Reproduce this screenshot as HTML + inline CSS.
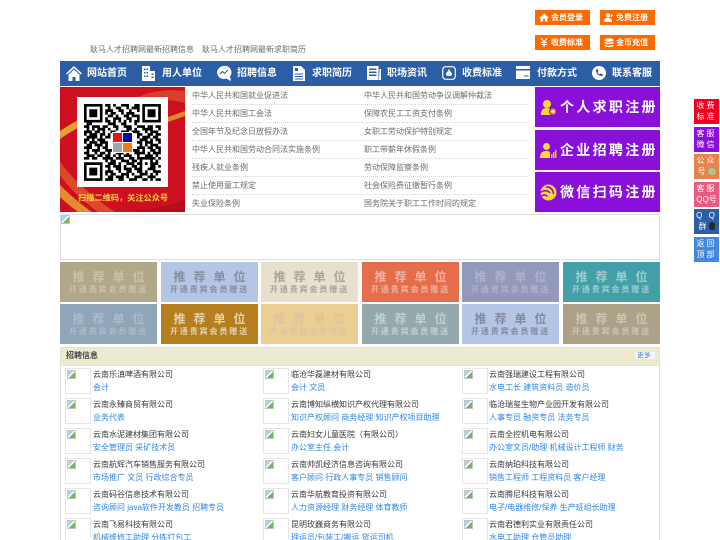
<!DOCTYPE html>
<html lang="zh-CN">
<head>
<meta charset="utf-8">
<title>耿马人才招聘网</title>
<style>
html,body{margin:0;padding:0;background:#fff;width:720px;height:540px;overflow:hidden;}
#w{position:relative;width:720px;height:540px;overflow:hidden;background:#fff;font-family:"Liberation Sans","Noto Sans CJK SC",sans-serif;filter:blur(.3px);}
.a{position:absolute;white-space:nowrap;}
a{text-decoration:none;color:inherit;}
.tb{position:absolute;width:55px;height:15px;background:#ff6a00;color:#fff;font-size:8px;line-height:15px;font-weight:bold;}
.tb svg{position:absolute;left:4px;top:3px;}
.tb span{position:absolute;left:16px;top:0;}
.nav{position:absolute;left:60px;top:61px;width:600px;height:25px;background:#2c5ea6;}
.nav span{position:absolute;top:0;line-height:25px;font-size:10px;font-weight:bold;color:#fff;white-space:nowrap;}
.nav svg{position:absolute;top:5px;}
.l{position:absolute;font-size:8px;line-height:18px;height:18px;color:#6c6c6c;white-space:nowrap;}
.dot{position:absolute;left:192px;width:336px;height:0;border-top:1px dotted #d6d6d6;}
.reg{position:absolute;left:535px;width:125px;background:#8a0fd8;color:#fff;font-size:14px;font-weight:bold;letter-spacing:2.3px;white-space:nowrap;}
.reg span{position:absolute;left:25px;top:50%;margin-top:-10px;line-height:20px;}
.reg svg{position:absolute;left:5px;top:50%;margin-top:-8px;}
.t{position:absolute;width:97px;height:40px;text-align:center;white-space:nowrap;}
.t b{position:absolute;left:0;right:0;top:8px;font-size:12px;line-height:14px;letter-spacing:8px;text-indent:8px;}
.t i{position:absolute;left:0;right:0;top:22px;font-style:normal;font-size:8px;line-height:12px;letter-spacing:1.9px;font-weight:bold;}
.s{position:absolute;left:694px;width:25px;color:#fff;font-size:8px;line-height:10.5px;text-align:center;letter-spacing:2px;}
.s div{padding-top:2px;}
.im{position:absolute;width:24px;height:24px;border:1px solid #e6e6e6;background:#fff;}
.im::before{content:"";position:absolute;left:1px;top:1px;width:7px;height:7px;border:1px solid #c4c4c4;background:linear-gradient(135deg,#b8cfee 0 42%,#fff 42% 55%,#70b864 55%);}
.n{position:absolute;font-size:8px;line-height:12px;color:#3a3a3a;white-space:nowrap;}
.j{position:absolute;font-size:8px;line-height:12px;color:#2f86e4;white-space:nowrap;}
</style>
</head>
<body>
<div id="w">

<div class="a" style="left:90px;top:44px;font-size:8px;line-height:12px;color:#6c6c6c;">耿马人才招聘网最新招聘信息</div>
<div class="a" style="left:202px;top:44px;font-size:8px;line-height:12px;color:#6c6c6c;">耿马人才招聘网最新求职简历</div>

<a class="tb" href="#" style="left:535px;top:10px;"><svg width="10" height="9" viewBox="0 0 10 9"><path d="M5 0.5 0 5h1.5v3.5h2.500V6h2v2.500h2.500V5H10z" fill="#fff"/></svg><span>会员登录</span></a>
<a class="tb" href="#" style="left:600px;top:10px;"><svg width="10" height="9" viewBox="0 0 10 9"><circle cx="4" cy="2.500" r="2.200" fill="#fff"/><path d="M0 9c0-3 1.500-4 4-4s4 1 4 4z" fill="#fff"/><path d="M7 1h1v1h1v1H8v1H7z" fill="#fff"/></svg><span>免费注册</span></a>
<a class="tb" href="#" style="left:535px;top:35px;"><svg width="10" height="9" viewBox="0 0 10 9"><path d="M2 0l3 4 3-4M2 4.500h6M2 6.500h6M5 4v5" fill="none" stroke="#fff" stroke-width="1.100"/></svg><span>收费标准</span></a>
<a class="tb" href="#" style="left:600px;top:35px;"><svg width="10" height="10" viewBox="0 0 10 10"><ellipse cx="5" cy="2" rx="4.500" ry="1.800" fill="#fff"/><path d="M0.500 3.500c1 1.500 8 1.500 9 0v1.500c-1 1.500-8 1.500-9 0zM0.500 6.500c1 1.500 8 1.500 9 0V8c-1 1.500-8 1.500-9 0z" fill="#fff"/></svg><span>金币充值</span></a>

<div class="nav">
  <svg style="left:6px" width="16" height="15" viewBox="0 0 16 15"><path d="M8 0 0 7.500l1 1L8 2.200l7 6.300 1-1zM8 3.600 2.500 8.600V15H6.500v-4h3v4h4V8.600z" fill="#fff"/></svg>
  <span style="left:27px">网站首页</span>
  <svg style="left:82px" width="13" height="15" viewBox="0 0 13 15"><path d="M0 0h8v15H0zM8 5h5v10H8z" fill="#fff"/><path d="M2 2.500h1.500V4H2zM4.500 2.500H6V4H4.500zM2 6h1.500v1.500H2zM4.500 6H6v1.500H4.500zM2 9.500h1.500V11H2zM4.500 9.500H6V11H4.500zM9.500 7.500H11.500V9H9.500zM9.500 10.500H11.500V12H9.500z" fill="#2c5ea6"/></svg>
  <span style="left:102px">用人单位</span>
  <svg style="left:157px" width="15" height="15" viewBox="0 0 15 15"><path d="M7 0a7 6.500 0 1 0 2.500 12.600L14 15l-1-4.500A6.500 6.500 0 0 0 7 0z" fill="#fff"/><path d="M3 8l2.500-2.500L7.500 7.500 11 4" fill="none" stroke="#2c5ea6" stroke-width="1.100"/></svg>
  <span style="left:177px">招聘信息</span>
  <svg style="left:233px" width="12" height="15" viewBox="0 0 12 15"><path d="M0 0h8l4 4v11H0z" fill="#fff"/><path d="M2 2h3v3H2zM2 7.500h8v1H2zM2 10h8v1H2zM2 12.500h8v1H2z" fill="#2c5ea6"/></svg>
  <span style="left:252px">求职简历</span>
  <svg style="left:307px" width="14" height="14" viewBox="0 0 14 14"><path d="M0 0h11.500v14H0z" fill="#fff"/><path d="M2 2.500h7.500v1.500H2zM2 5.500h7.500V7H2zM2 8.500h7.500V10H2z" fill="#2c5ea6"/><path d="M12.500 3H14v11h-2z" fill="#fff"/></svg>
  <span style="left:327px">职场资讯</span>
  <svg style="left:382px" width="14" height="14" viewBox="0 0 14 14"><rect x="0.700" y="0.700" width="12.600" height="12.600" rx="3" fill="none" stroke="#fff" stroke-width="1.200"/><path d="M7 3c1 1 1 1.500.500 2 1.500.500 2.500 2 2.500 3.500 0 1-1 1.500-3 1.500s-3-.5-3-1.500C4 7 5 5.500 6.500 5 6 4.500 6 4 7 3z" fill="#fff"/></svg>
  <span style="left:402px">收费标准</span>
  <svg style="left:456px" width="14" height="13" viewBox="0 0 14 13"><path d="M0 0h14v3H0zM0 4.500h14V13H0z" fill="#fff"/><path d="M8 9.500h4.500v1H8z" fill="#2c5ea6"/></svg>
  <span style="left:477px">付款方式</span>
  <svg style="left:532px" width="14" height="14" viewBox="0 0 14 14"><circle cx="7" cy="7" r="7" fill="#fff"/><path d="M4 3.500 5.500 3l1 2.300-.9.800c.4 1 1.200 1.800 2.200 2.200l.8-.9 2.300 1-.5 1.600c-3.500.6-7-3-6.400-6.500z" fill="#2c5ea6"/></svg>
  <span style="left:552px">联系客服</span>
</div>

<!-- red QR banner -->
<svg class="a" style="left:60px;top:87px;" width="125" height="125" viewBox="0 0 125 125">
  <rect width="125" height="125" fill="#cc1020"/>
  <path d="M60 20C85 3 105 2 125 4v12C100 10 85 12 60 20z" fill="#d9402a"/>
  <path d="M0 44C15 34 30 26 45 22v8C28 35 14 42 0 52z" fill="#e5a030"/>
  <path d="M108 30 125 24v5l-17 6z" fill="#e08a2c"/>
  <path d="M0 75C15 95 35 112 55 125H38C22 113 8 100 0 88z" fill="#dc4a2a"/>
  <path d="M0 98C12 110 22 118 32 125H18C10 119 4 114 0 110z" fill="#e58a30"/>
  <path d="M70 125c20-3 40-6 55-12v12z" fill="#b40d1c"/>
  <rect x="17" y="10" width="91" height="90" fill="#fff"/>
  <g transform="translate(24 17) scale(2.650)">
    <path d="M0 0h7v7H0zM1 1v5h5V1zM2 2h3v3H2zM22 0h7v7h-7zM23 1v5h5V1zM24 2h3v3h-3zM0 22h7v7H0zM1 23v5h5v-5zM2 24h3v3H2z" fill="#000" fill-rule="evenodd"/>
    <path fill="none" stroke="#000" stroke-width="1" d="
    M8 .5h2M11 .5h1M14 .5h3M19 .5h2
    M9 1.500h1M12 1.500h2M16 1.500h1M18 1.500h3
    M8 2.500h3M13 2.500h2M17 2.500h1M20 2.500h1
    M8 3.500h1M10 3.500h2M14 3.500h1M16 3.500h3
    M9 4.500h2M12 4.500h1M15 4.500h2M18 4.500h3
    M8 5.500h1M11 5.500h3M16 5.500h2M20 5.500h1
    M8 6.500h2M11 6.500h1M13 6.500h1M15 6.500h1M17 6.500h1M19 6.500h2
    M1 7.500h2M9 7.500h3M14 7.500h2M19 7.500h1
    M0 8.500h2M3 8.500h3M7 8.500h2M11 8.500h2M15 8.500h3M20 8.500h3M24 8.500h2M27 8.500h2
    M1 9.500h1M3 9.500h1M5 9.500h3M9 9.500h1M12 9.500h1M16 9.500h2M19 9.500h1M22 9.500h4M28 9.500h1
    M0 10.500h3M4 10.500h2M7 10.500h1M10 10.500h2M14 10.500h3M18 10.500h3M23 10.500h1M25 10.500h3
    M0 11.500h1M2 11.500h3M6 11.500h2M9 11.500h1M20 11.500h2M24 11.500h2M27 11.500h2
    M1 12.500h4M6 12.500h1M8 12.500h2M20 12.500h1M22 12.500h3M26 12.500h2
    M0 13.500h2M3 13.500h1M5 13.500h3M21 13.500h3M25 13.500h1M27 13.500h2
    M0 14.500h1M2 14.500h3M6 14.500h3M20 14.500h2M23 14.500h3M28 14.500h1
    M1 15.500h2M4 15.500h3M8 15.500h1M21 15.500h1M23 15.500h1M25 15.500h3
    M0 16.500h3M5 16.500h1M7 16.500h2M20 16.500h3M24 16.500h2M27 16.500h2
    M1 17.500h1M3 17.500h3M8 17.500h3M14 17.500h2M18 17.500h3M22 17.500h1M25 17.500h2M28 17.500h1
    M0 18.500h2M4 18.500h1M6 18.500h2M9 18.500h1M12 18.500h3M16 18.500h1M19 18.500h4M24 18.500h1M26 18.500h3
    M1 19.500h3M5 19.500h2M8 19.500h2M11 19.500h1M13 19.500h1M15 19.500h3M20 19.500h1M23 19.500h3M27 19.500h1
    M0 20.500h2M3 20.500h2M7 20.500h4M12 20.500h3M17 20.500h2M20 20.500h7M28 20.500h1
    M8 21.500h1M10 21.500h2M14 21.500h3M18 21.500h2M21 21.500h1M25 21.500h1M27 21.500h1
    M9 22.500h3M13 22.500h1M16 22.500h3M20 22.500h2M23 22.500h1M25 22.500h3
    M8 23.500h2M11 23.500h3M15 23.500h1M18 23.500h2M21 23.500h1M25 23.500h2M28 23.500h1
    M9 24.500h1M12 24.500h2M15 24.500h3M19 24.500h3M24 24.500h3
    M8 25.500h3M13 25.500h1M16 25.500h2M20 25.500h2M23 25.500h1M26 25.500h3
    M8 26.500h1M10 26.500h2M14 26.500h3M18 26.500h1M21 26.500h3M25 26.500h1M27 26.500h1
    M9 27.500h2M12 27.500h3M16 27.500h1M19 27.500h3M24 27.500h3
    M8 28.500h3M13 28.500h2M17 28.500h3M22 28.500h2M25 28.500h1M27 28.500h2"/>
  </g>
  <rect x="52" y="45" width="21" height="21" fill="#fff"/>
  <rect x="53" y="46" width="9" height="9" fill="#e8101a"/>
  <rect x="63" y="46" width="9" height="9" fill="#00109c"/>
  <rect x="53" y="56" width="9" height="9" fill="#a4a4a4"/>
  <rect x="63" y="56" width="9" height="9" fill="#f87818"/>
  <text x="18" y="113.500" font-size="8.200" font-weight="bold" fill="#f8d040" font-family="'Liberation Sans','Noto Sans CJK SC',sans-serif">扫描二维码，关注公众号</text>
</svg>

<!-- lists -->
<div class="dot" style="top:104px"></div><div class="dot" style="top:122px"></div><div class="dot" style="top:140px"></div><div class="dot" style="top:158px"></div><div class="dot" style="top:176px"></div><div class="dot" style="top:194px"></div>
<a class="l" href="#" style="left:192px;top:87px">中华人民共和国就业促进法</a>
<a class="l" href="#" style="left:192px;top:105px">中华人民共和国工会法</a>
<a class="l" href="#" style="left:192px;top:123px">全国年节及纪念日放假办法</a>
<a class="l" href="#" style="left:192px;top:141px">中华人民共和国劳动合同法实施条例</a>
<a class="l" href="#" style="left:192px;top:159px">残疾人就业条例</a>
<a class="l" href="#" style="left:192px;top:177px">禁止使用童工规定</a>
<a class="l" href="#" style="left:192px;top:195px">失业保险条例</a>
<a class="l" href="#" style="left:364px;top:87px">中华人民共和国劳动争议调解仲裁法</a>
<a class="l" href="#" style="left:364px;top:105px">保障农民工工资支付条例</a>
<a class="l" href="#" style="left:364px;top:123px">女职工劳动保护特别规定</a>
<a class="l" href="#" style="left:364px;top:141px">职工带薪年休假条例</a>
<a class="l" href="#" style="left:364px;top:159px">劳动保障监察条例</a>
<a class="l" href="#" style="left:364px;top:177px">社会保险费征缴暂行条例</a>
<a class="l" href="#" style="left:364px;top:195px">国务院关于职工工作时间的规定</a>

<!-- register -->
<a class="reg" href="#" style="top:87px;height:40px"><svg width="17" height="17" viewBox="0 0 17 17"><circle cx="7" cy="5" r="4" fill="#f8d838"/><path d="M1 16c0-5 2-7 6-7s5 2 5 7z" fill="#f8d838"/><circle cx="13" cy="12.500" r="3.500" fill="#f8a020" stroke="#8a0fd8"/><path d="M11.500 12.500h3M13 11v3" stroke="#fff"/></svg><span>个人求职注册</span></a>
<a class="reg" href="#" style="top:130px;height:40px"><svg width="17" height="17" viewBox="0 0 17 17"><circle cx="6.500" cy="4.500" r="3.500" fill="#f8d838"/><path d="M0 16c0-5 2-7 6.500-7 2 0 3 .5 3.500 1.500V16z" fill="#f8d838"/><path d="M11 12h1.500v4H11zM13 10h1.500v6H13zM15 8h1.500v8H15z" fill="#f8b030"/></svg><span>企业招聘注册</span></a>
<a class="reg" href="#" style="top:172px;height:40px"><svg width="17" height="17" viewBox="0 0 17 17"><circle cx="8.500" cy="8.500" r="8" fill="#f8d838"/><path d="M0 9c3-3 8-3 10 0M1 12.500c2-2 5-2 6.500 0M6 3c4-.5 7 2 7.500 7" fill="none" stroke="#8a0fd8" stroke-width="1.500"/></svg><span>微信扫码注册</span></a>

<!-- banner box -->
<div class="a" style="left:60px;top:214px;width:598px;height:44px;border:1px solid #dedede;"></div>
<div class="im" style="left:60px;top:214px;width:9px;height:9px;border:0;background:transparent;"></div>

<!-- tiles -->
<div class="t" style="left:60px;top:262px;background:#b3a78a;color:rgba(255,255,255,.3)"><b>推荐单位</b><i>开通贵宾会员赠送</i></div>
<div class="t" style="left:161px;top:262px;background:#b4c5e6;color:#878d9e"><b>推荐单位</b><i>开通贵宾会员赠送</i></div>
<div class="t" style="left:261px;top:262px;background:#e8e0ce;color:#a8a49a"><b>推荐单位</b><i>开通贵宾会员赠送</i></div>
<div class="t" style="left:362px;top:262px;background:#e56d4c;color:rgba(255,255,255,.48)"><b>推荐单位</b><i>开通贵宾会员赠送</i></div>
<div class="t" style="left:462px;top:262px;background:#9399ba;color:rgba(255,255,255,.25)"><b>推荐单位</b><i>开通贵宾会员赠送</i></div>
<div class="t" style="left:563px;top:262px;background:#44a0a8;color:rgba(255,255,255,.48)"><b>推荐单位</b><i>开通贵宾会员赠送</i></div>
<div class="t" style="left:60px;top:304px;background:#8fa5b8;color:rgba(255,255,255,.25)"><b>推荐单位</b><i>开通贵宾会员赠送</i></div>
<div class="t" style="left:161px;top:304px;background:#b57e1f;color:rgba(255,255,255,.65)"><b>推荐单位</b><i>开通贵宾会员赠送</i></div>
<div class="t" style="left:261px;top:304px;background:#ecce94;color:#dcc4a0"><b>推荐单位</b><i>开通贵宾会员赠送</i></div>
<div class="t" style="left:362px;top:304px;background:#93a9ac;color:rgba(255,255,255,.45)"><b>推荐单位</b><i>开通贵宾会员赠送</i></div>
<div class="t" style="left:462px;top:304px;background:#b4c5e6;color:#838a9c"><b>推荐单位</b><i>开通贵宾会员赠送</i></div>
<div class="t" style="left:563px;top:304px;background:#ada288;color:rgba(255,255,255,.38)"><b>推荐单位</b><i>开通贵宾会员赠送</i></div>

<!-- panel -->
<div class="a" style="left:60px;top:347px;width:598px;height:200px;border:1px solid #e0e0e0;"></div>
<div class="a" style="left:61px;top:348px;width:598px;height:17px;background:#ecebcf;border-bottom:1px solid #e2e2d4;"></div>
<div class="a" style="left:66px;top:350px;font-size:8px;line-height:12px;font-weight:bold;color:#444;">招聘信息</div>
<div class="a" style="left:635px;top:352px;width:20px;height:7px;background:#f4f6fa;border-radius:1px;font-size:7px;line-height:7px;color:#3f7fd6;text-indent:2px;overflow:hidden;">更多</div>

<div class="im" style="left:65px;top:368px"></div><div class="im" style="left:263px;top:368px"></div><div class="im" style="left:462px;top:368px"></div>
<div class="im" style="left:65px;top:398px"></div><div class="im" style="left:263px;top:398px"></div><div class="im" style="left:462px;top:398px"></div>
<div class="im" style="left:65px;top:428px"></div><div class="im" style="left:263px;top:428px"></div><div class="im" style="left:462px;top:428px"></div>
<div class="im" style="left:65px;top:458px"></div><div class="im" style="left:263px;top:458px"></div><div class="im" style="left:462px;top:458px"></div>
<div class="im" style="left:65px;top:488px"></div><div class="im" style="left:263px;top:488px"></div><div class="im" style="left:462px;top:488px"></div>
<div class="im" style="left:65px;top:518px"></div><div class="im" style="left:263px;top:518px"></div><div class="im" style="left:462px;top:518px"></div>

<a class="n" href="#" style="left:93px;top:369px">云南乐滇啤酒有限公司</a><a class="j" href="#" style="left:93px;top:382px">会计</a>
<a class="n" href="#" style="left:291px;top:369px">临沧华磊建材有限公司</a><a class="j" href="#" style="left:291px;top:382px">会计 文员</a>
<a class="n" href="#" style="left:489px;top:369px">云南强瑞建设工程有限公司</a><a class="j" href="#" style="left:489px;top:382px">水电工长 建筑资料员 造价员</a>

<a class="n" href="#" style="left:93px;top:399px">云南永臻商贸有限公司</a><a class="j" href="#" style="left:93px;top:412px">业务代表</a>
<a class="n" href="#" style="left:291px;top:399px">云南博知纵横知识产权代理有限公司</a><a class="j" href="#" style="left:291px;top:412px">知识产权顾问 商务经理 知识产权项目助理</a>
<a class="n" href="#" style="left:489px;top:399px">临沧瑞玺生物产业园开发有限公司</a><a class="j" href="#" style="left:489px;top:412px">人事专员 融资专员 法务专员</a>

<a class="n" href="#" style="left:93px;top:429px">云南水泥建材集团有限公司</a><a class="j" href="#" style="left:93px;top:442px">安全管理员 采矿技术员</a>
<a class="n" href="#" style="left:291px;top:429px">云南妇女儿童医院（有限公司）</a><a class="j" href="#" style="left:291px;top:442px">办公室主任 会计</a>
<a class="n" href="#" style="left:489px;top:429px">云南全控机电有限公司</a><a class="j" href="#" style="left:489px;top:442px">办公室文员/助理 机械设计工程师 财务</a>

<a class="n" href="#" style="left:93px;top:459px">云南航辉汽车销售服务有限公司</a><a class="j" href="#" style="left:93px;top:472px">市场推广 文员 行政综合专员</a>
<a class="n" href="#" style="left:291px;top:459px">云南帅凯经济信息咨询有限公司</a><a class="j" href="#" style="left:291px;top:472px">客户顾问 行政人事专员 销售顾问</a>
<a class="n" href="#" style="left:489px;top:459px">云南纳珀科技有限公司</a><a class="j" href="#" style="left:489px;top:472px">销售工程师 工程资料员 客户经理</a>

<a class="n" href="#" style="left:93px;top:489px">云南码谷信息技术有限公司</a><a class="j" href="#" style="left:93px;top:502px">咨询顾问 java软件开发教员 招聘专员</a>
<a class="n" href="#" style="left:291px;top:489px">云南华航教育投资有限公司</a><a class="j" href="#" style="left:291px;top:502px">人力资源经理 财务经理 体育教师</a>
<a class="n" href="#" style="left:489px;top:489px">云南腾尼科技有限公司</a><a class="j" href="#" style="left:489px;top:502px">电子/电器维修/保养 生产班组长助理</a>

<a class="n" href="#" style="left:93px;top:519px">云南飞易科技有限公司</a><a class="j" href="#" style="left:93px;top:532px">机械维修工助理 分拣打包工</a>
<a class="n" href="#" style="left:291px;top:519px">昆明玫巍商务有限公司</a><a class="j" href="#" style="left:291px;top:532px">理运员/包装工/搬运 货运司机</a>
<a class="n" href="#" style="left:489px;top:519px">云南君德利实业有限责任公司</a><a class="j" href="#" style="left:489px;top:532px">水电工助理 仓管员助理</a>

<!-- sidebar -->
<a class="s" href="#" style="top:99px;height:25px;background:#f0001e"><div>收费<br>标准</div></a>
<a class="s" href="#" style="top:127px;height:25px;background:#8a10d8"><div>客服<br>微信</div></a>
<a class="s" href="#" style="top:154px;height:25px;background:#e8824a"><div>公众<br>号<span style="display:inline-block;width:8px;height:7px;background:#a8c890;border-radius:4px;vertical-align:-1px;"></span></div></a>
<a class="s" href="#" style="top:182px;height:25px;background:#e85a80"><div>客服<br><span style="letter-spacing:0">QQ号</span></div></a>
<a class="s" href="#" style="top:209px;height:25px;background:#2c5ea6"><div>Q Q<br>群<span style="display:inline-block;width:6px;height:8px;background:#2a2a2a;border-radius:3px 3px 2px 2px;vertical-align:-1px;"></span></div></a>
<a class="s" href="#" style="top:237px;height:25px;background:#4488dd"><div>返回<br>顶部</div></a>

</div>
</body>
</html>
